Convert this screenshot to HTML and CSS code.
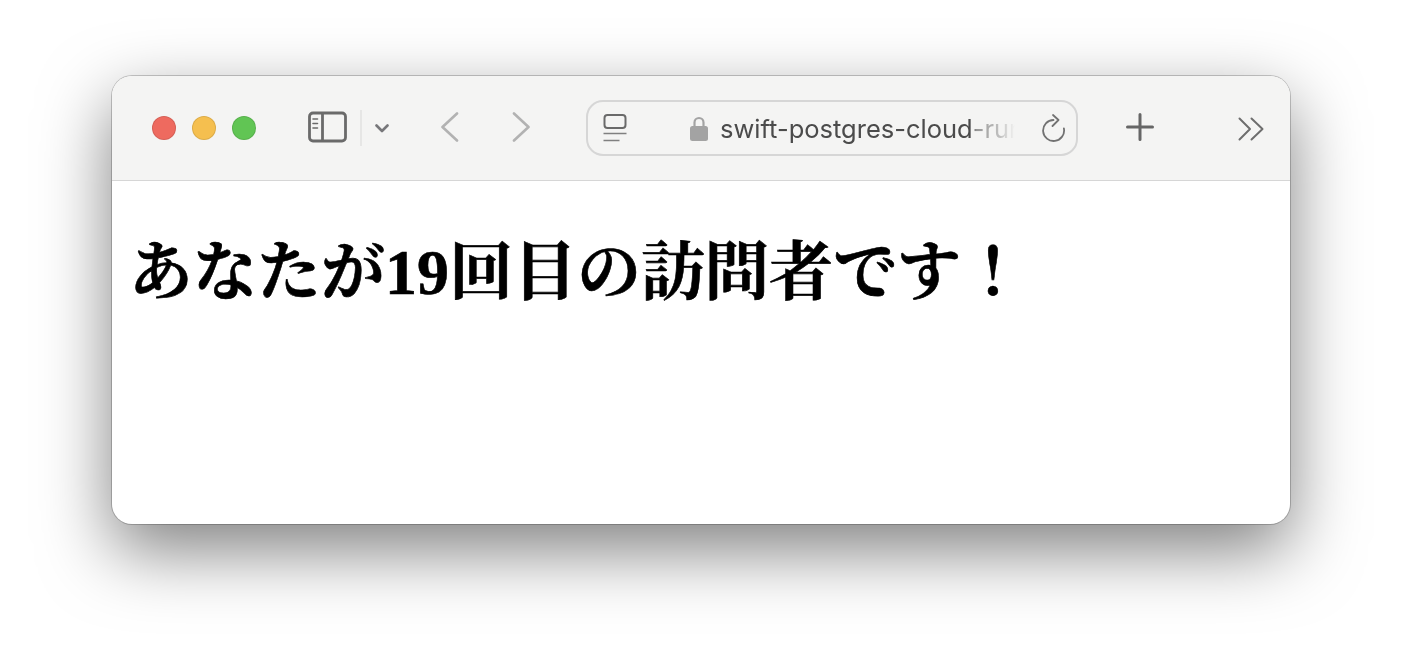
FILE: index.html
```html
<!DOCTYPE html>
<html lang="ja">
  <head>
    <meta charset="utf-8">
    <title>swift-postgres-cloud-run</title>
    <link rel="stylesheet" href="styles.css">
  </head>

  <body>
    <div class="window">
      <div class="toolbar">
        <div class="lights">
          <span class="light red"></span>
          <span class="light yellow"></span>
          <span class="light green"></span>
        </div>

        <!-- sidebar toggle -->
        <svg class="icon sidebar" width="40" height="32" viewBox="0 0 40 32" fill="none" stroke="#6a6a6a">
          <rect x="1.500" y="2" width="36" height="28" rx="3.500" stroke-width="2.800"/>
          <path d="M14.500 2v28" stroke-width="2.800"/>
          <path d="M5 8h4.500M5 12.500h4.500M5 17h4.500" stroke-width="1.600" stroke-linecap="round"/>
        </svg>
        <span class="divider"></span>
        <svg class="icon chevron" width="14" height="9" viewBox="0 0 14 9" fill="none" stroke="#77777a" stroke-width="2.600" stroke-linecap="round" stroke-linejoin="round">
          <path d="M1.500 1.500 7 7l5.500-5.500"/>
        </svg>

        <svg class="icon back" width="20" height="30" viewBox="0 0 20 30" fill="none" stroke="#b2b2b2" stroke-width="2.600" stroke-linecap="round" stroke-linejoin="round">
          <path d="M17 1.500 2.500 15 17 28.500"/>
        </svg>
        <svg class="icon forward" width="20" height="30" viewBox="0 0 20 30" fill="none" stroke="#b2b2b2" stroke-width="2.600" stroke-linecap="round" stroke-linejoin="round">
          <path d="M3 1.500 17.500 15 3 28.500"/>
        </svg>

        <div class="urlbar">
          <svg class="icon reader" width="24" height="28" viewBox="0 0 24 28" fill="none">
            <rect x="1.500" y="1" width="21" height="13" rx="3" stroke="#6a6a6a" stroke-width="2"/>
            <path d="M0.500 19.500h23M0.500 26.500h16" stroke="#808080" stroke-width="1.600"/>
          </svg>
          <svg class="icon lock" width="18" height="25" viewBox="0 0 18 25">
            <path d="M4.500 11V6.500a4.500 4.500 0 0 1 9 0V11" fill="none" stroke="#a3a3a3" stroke-width="2.200"/>
            <rect x="0" y="10" width="18" height="15" rx="2.500" fill="#a3a3a3"/>
          </svg>
          <span class="url">swift-postgres-cloud-run</span>
          <svg class="icon reload" width="24" height="28" viewBox="0 0 24 28" fill="none" stroke="#727272" stroke-width="1.800" stroke-linecap="round" stroke-linejoin="round">
            <path d="M11.500 6A10.500 10.500 0 1 0 21.900 14.500"/>
            <path d="M11 1 16.500 6 10.500 12"/>
          </svg>
        </div>

        <svg class="icon plus" width="28" height="28" viewBox="0 0 28 28" fill="none" stroke="#666" stroke-width="3" stroke-linecap="round">
          <path d="M14 1.500v25M1.500 14h25"/>
        </svg>
        <svg class="icon more" width="26" height="24" viewBox="0 0 26 24" fill="none" stroke="#6e6e6e" stroke-width="2" stroke-linecap="round" stroke-linejoin="round">
          <path d="M1.500 1.500 12 12 1.500 22.500M13.500 1.500 24.500 12 13.500 22.500"/>
        </svg>
      </div>

      <div class="content">
        <h1>あなたが19回目の訪問者です！</h1>
      </div>
    </div>
  </body>
</html>
```

FILE: styles.css
```css
html, body {
  margin: 0;
  background: #fff;
}

body {
  width: 1402px;
  height: 672px;
  overflow: hidden;
  padding: 76px 0 0 112px;
  box-sizing: border-box;
}

.window {
  width: 1178px;
  height: 448px;
  border-radius: 20px;
  background: #fff;
  overflow: hidden;
  box-shadow: 0 0 0 1px rgba(0, 0, 0, 0.2), 0 26px 70px rgba(0, 0, 0, 0.5);
}

/* Toolbar */
.toolbar {
  display: flex;
  align-items: center;
  height: 104px;
  padding: 0 0 0 40px;
  background: #f4f4f3;
  border-bottom: 1px solid #d6d6d6;
  box-sizing: content-box;
}

.icon {
  display: block;
  flex: none;
}

.lights {
  display: flex;
  gap: 16px;
}

.light {
  width: 24px;
  height: 24px;
  border-radius: 50%;
  box-sizing: border-box;
  border: 1px solid rgba(0, 0, 0, 0.1);
}

.red {
  background: #ee6a5f;
}

.yellow {
  background: #f5bf4f;
}

.green {
  background: #61c554;
}

.sidebar {
  margin: 0 0 2px 52px;
}

.divider {
  width: 2px;
  height: 36px;
  margin-left: 12px;
  background: #e6e6e5;
}

.chevron {
  margin-left: 13px;
}

.back {
  margin: 0 0 2px 51px;
}

.forward {
  margin: 0 0 2px 51px;
}

/* Address bar */
.urlbar {
  display: flex;
  align-items: center;
  width: 492px;
  height: 56px;
  margin-left: 55px;
  padding: 0 10px 0 15px;
  border: 2px solid #d6d6d6;
  border-radius: 17px;
  box-sizing: border-box;
}

.lock {
  margin-left: 63px;
}

.url {
  flex: none;
  width: 295px;
  margin-left: 12px;
  padding-top: 2px;
  font-family: "Inter", "Liberation Sans", sans-serif;
  font-size: 25.500px;
  line-height: 32px;
  color: #4b4b4b;
  white-space: nowrap;
  overflow: hidden;
  -webkit-mask-image: linear-gradient(to right, #000 85%, rgba(0, 0, 0, 0.55) 87%, rgba(0, 0, 0, 0.3) 95%, transparent 100%);
  mask-image: linear-gradient(to right, #000 85%, rgba(0, 0, 0, 0.55) 87%, rgba(0, 0, 0, 0.3) 95%, transparent 100%);
}

.reload {
  margin-left: 27px;
}

.plus {
  margin: 0 0 2px 48px;
}

.more {
  margin: 2px 0 0 84px;
}

/* Page */
.content {
  padding: 50px 17px 0;
}

h1 {
  margin: 0;
  font-family: "Liberation Serif", "Noto Serif CJK JP", "Noto Sans CJK JP", serif;
  font-size: 64px;
  font-weight: bold;
  line-height: 84px;
  color: #000;
  -webkit-text-stroke: 0.6px #000;
}
```
